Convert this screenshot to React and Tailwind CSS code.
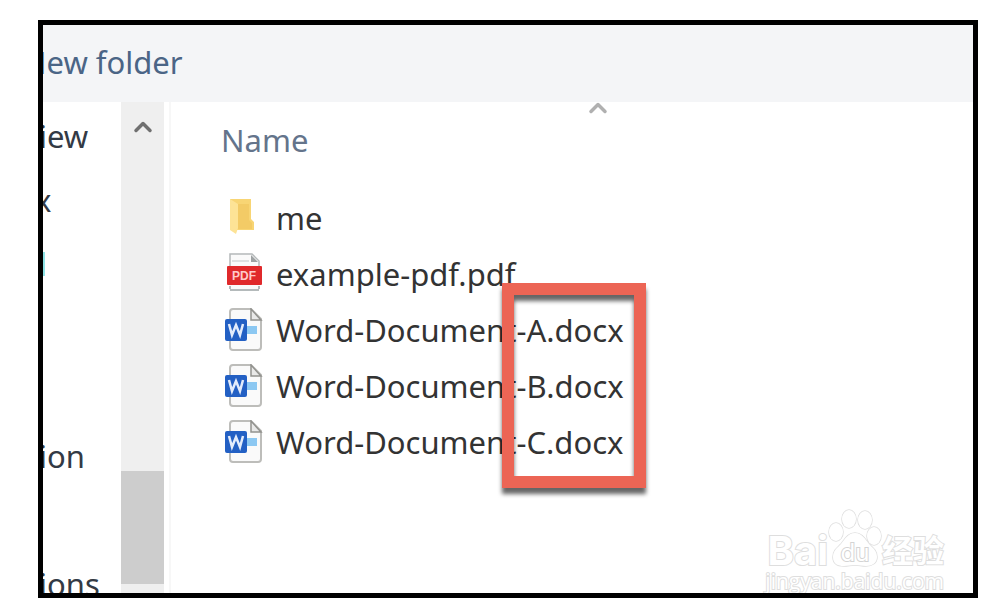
import { ChevronUp } from 'lucide-react'

const sidebarItems = [
  { id: 'view', label: 'iew' },
  { id: 'box', label: 'x', cut: true },
  { id: 'accent', accent: true },
  { id: 'empty-1' },
  { id: 'empty-2' },
  { id: 'section', label: 'ion' },
  { id: 'empty-3' },
  { id: 'sections', label: 'ions' },
]

const files = [
  { name: 'me', type: 'folder' },
  { name: 'example-pdf.pdf', type: 'pdf' },
  { name: 'Word-Document-A.docx', type: 'word' },
  { name: 'Word-Document-B.docx', type: 'word' },
  { name: 'Word-Document-C.docx', type: 'word' },
]

const FolderIcon = () => (
  <svg width="40" height="44" viewBox="0 0 40 44" aria-hidden="true">
    <path d="M6 3h21v20l3 3v8H8z" fill="#f8d574" />
    <path d="M14 8h11v16l3 3v6H14z" fill="#f3cb66" />
    <path d="M6 3l8 5v24l-2 6-6-4z" fill="#fde396" />
  </svg>
)

const PdfIcon = () => (
  <svg width="40" height="44" viewBox="0 0 40 44" aria-hidden="true">
    <path d="M6 38V3h21l8 7v28z" fill="#fafafa" />
    <path d="M6 14V2h22l7 7v6" fill="none" stroke="#b4b8b9" strokeWidth="1.5" />
    <path d="M6 34v3M35 34v3M6 38h29" fill="none" stroke="#b4babb" strokeWidth="2" />
    <path d="M8 9h17" stroke="#d3d7d8" strokeWidth="1.5" />
    <path d="M27 3v7h7z" fill="#9ea2a3" />
    <rect x="3" y="14" width="35" height="19" rx="1" fill="#e0292b" />
    <text x="20" y="28" textAnchor="middle" fontFamily="Liberation Sans" fontWeight="bold" fontSize="12" fill="#ffc9c9">
      PDF
    </text>
  </svg>
)

const WordIcon = () => (
  <svg width="40" height="44" viewBox="0 0 40 44" aria-hidden="true">
    <path d="M9 1h18l10 10v28a3 3 0 0 1-3 3H9a3 3 0 0 1-3-3V4a3 3 0 0 1 3-3z" fill="#fafafa" stroke="#bdbdba" strokeWidth="2" />
    <path d="M27 1v11h10z" fill="#e9e9e8" stroke="#92928e" strokeWidth="1.5" />
    <rect x="23" y="18" width="10" height="8" fill="#8cc8f2" />
    <rect x="1" y="11" width="22" height="22" rx="2" fill="#2360c4" />
    <path d="M5 16l3 11 4-10 4 10 3-11" fill="none" stroke="#e3ecfb" strokeWidth="2.5" />
  </svg>
)

const icons = { folder: FolderIcon, pdf: PdfIcon, word: WordIcon }

const Watermark = () => (
  <div className="absolute right-[29px] bottom-0 flex flex-col items-end text-white [paint-order:stroke] [-webkit-text-stroke:2px_#dedede]">
    <div className="flex h-14 items-end">
      <span className="font-['Inter',sans-serif] text-[40px] leading-9 font-bold">Bai</span>
      <svg width="54" height="60" viewBox="0 0 54 60" className="shrink-0" aria-hidden="true">
        <g fill="#fff" stroke="#dedede" strokeWidth="1.5">
          <ellipse cx="8" cy="23" rx="7" ry="9" />
          <ellipse cx="21" cy="10" rx="7" ry="9" />
          <ellipse cx="37" cy="11" rx="7" ry="9" />
          <ellipse cx="46" cy="27" rx="7" ry="9" />
          <path d="M27 24c-7 0-10 6-14 11-4 4-8 7-8 13 0 7 5 9 11 9 4 0 7-1 11-1s7 1 11 1c6 0 11-3 11-9s-4-9-8-13c-4-5-7-11-14-11z" />
        </g>
        <text x="27" y="52" textAnchor="middle" fontFamily="Inter" fontSize="24" fill="#fff" stroke="#d4d4d4" strokeWidth="2">du</text>
      </svg>
      <span className="font-['Noto_Sans_CJK_SC',sans-serif] text-[31px] leading-10 font-bold">经验</span>
    </div>
    <span className="font-['Open_Sans',sans-serif] text-[21px] leading-6">jingyan.baidu.com</span>
  </div>
)

const App = () => {
  return (
    <div className="flex h-screen bg-white pt-5 pr-[22px] pb-[18px] pl-[38px] font-['Noto_Sans','Open_Sans',sans-serif] text-[31px] leading-10">
      <main className="relative flex min-w-0 flex-1 flex-col overflow-hidden border-[5px] border-black">
        {/* Toolbar */}
        <header className="flex h-[77px] shrink-0 items-center bg-[#f4f5f7] pb-1">
          <button type="button" className="-ml-5 whitespace-nowrap text-[#4b6586]">
            New folder
          </button>
        </header>

        <div className="flex min-h-0 flex-1">
          {/* Navigation pane */}
          <nav className="w-[78px] shrink-0 overflow-hidden pt-[2px]">
            <ul>
              {sidebarItems.map((item) => (
                <li key={item.id} className="flex h-16 items-center">
                  {item.label && (
                    <a href="#" className={`text-[#333a45] ${item.cut ? '-ml-2' : '-ml-1'}`}>
                      {item.label}
                    </a>
                  )}
                  {item.accent && <span className="h-6 w-[2px] bg-[#8fe3e6]" />}
                </li>
              ))}
            </ul>
          </nav>

          {/* Scrollbar */}
          <div className="flex w-[43px] shrink-0 flex-col bg-[#efefef] pb-[9px]">
            <button type="button" aria-label="Scroll up" className="flex h-[50px] items-center justify-center">
              <ChevronUp className="h-7 w-7 text-[#707070]" strokeWidth={3} />
            </button>
            <div className="mt-auto h-[113px] bg-[#cdcdcd]" />
          </div>
          <div className="ml-[5px] w-[2px] shrink-0 bg-[#f7f7f7]" />

          {/* File list */}
          <section className="relative min-w-0 flex-1">
            <ChevronUp className="absolute -top-2 left-[413px] h-7 w-7 text-[#b0b0b0]" strokeWidth={3} />
            <table className="w-full border-collapse text-left">
              <thead>
                <tr>
                  <th className="h-[88px] pb-3 pl-[50px] font-normal text-[#64748b]">Name</th>
                </tr>
              </thead>
              <tbody>
                {files.map((file) => {
                  const Icon = icons[file.type]
                  return (
                    <tr key={file.name}>
                      <td className="h-14 pl-[53px] text-[#333]">
                        <div className="flex items-center gap-3 whitespace-nowrap">
                          <Icon />
                          {file.name}
                        </div>
                      </td>
                    </tr>
                  )
                })}
              </tbody>
            </table>
            {/* Highlight around the file extensions */}
            <div className="absolute top-[181px] left-[331px] h-[205px] w-[144px] border-[12px] border-[#ec6555] drop-shadow-[0_6px_2px_rgba(0,0,0,0.6)]" />
          </section>
        </div>
        <Watermark />
      </main>
    </div>
  )
}

export default App
